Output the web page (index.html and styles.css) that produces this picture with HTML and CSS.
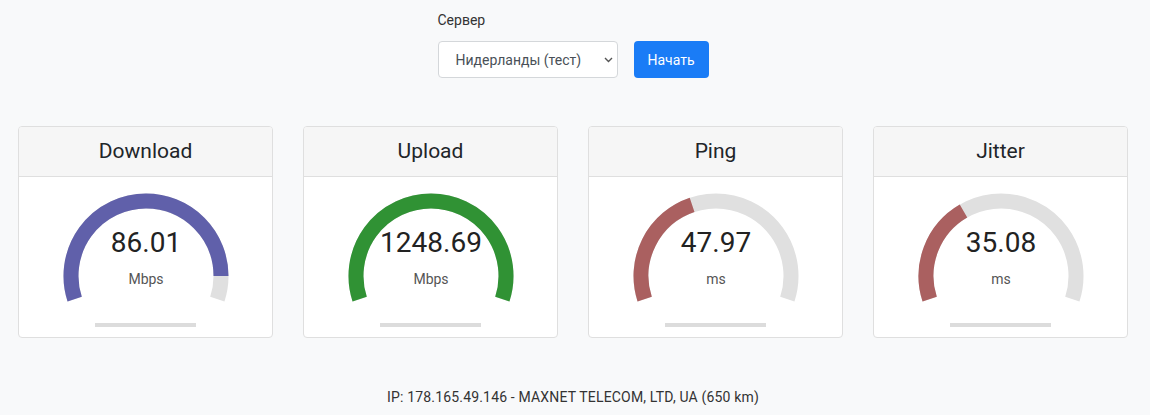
FILE: index.html
```html
<!DOCTYPE html>
<html lang="ru">
<head>
  <meta charset="UTF-8" />
  <meta name="viewport" content="width=device-width, initial-scale=1.0"/>
  <title>Speedtest</title>
  <link rel="stylesheet" href="styles.css">
</head>
<body>
  <div class="page">
    <!-- Server picker -->
    <div class="server">
      <label class="server-label" for="serverSelect">Сервер</label>
      <div class="server-row">
        <div class="select-wrap">
          <select id="serverSelect" class="server-select">
            <option>Нидерланды (тест)</option>
          </select>
          <svg class="select-arrow" width="9" height="6" viewBox="0 0 9 6"><path d="M1 1l3.5 3.5L8 1" fill="none" stroke="#555" stroke-width="1.4"/></svg>
        </div>
        <button class="start-button">Начать</button>
      </div>
    </div>

    <!-- Meters -->
    <div class="meters">
      <div class="meter-card">
        <div class="meter-head">Download</div>
        <div class="meter-body">
          <svg class="gauge" width="170" height="122" viewBox="0 0 170 122">
            <path class="arc-bg" d="M13.67 112.18 A75 75 0 1 1 156.33 112.18" />
            <path class="arc-dl" d="M13.67 112.18 A75 75 0 1 1 156.33 112.18" pathLength="100" stroke-dasharray="91.7 100" />
            <text class="gauge-value" x="85" y="65">86.01</text>
            <text class="gauge-unit" x="85" y="97">Mbps</text>
          </svg>
          <div class="progress"></div>
        </div>
      </div>

      <div class="meter-card">
        <div class="meter-head">Upload</div>
        <div class="meter-body">
          <svg class="gauge" width="170" height="122" viewBox="0 0 170 122">
            <path class="arc-bg" d="M13.67 112.18 A75 75 0 1 1 156.33 112.18" />
            <path class="arc-ul" d="M13.67 112.18 A75 75 0 1 1 156.33 112.18" pathLength="100" stroke-dasharray="100 100" />
            <text class="gauge-value" x="85" y="65">1248.69</text>
            <text class="gauge-unit" x="85" y="97">Mbps</text>
          </svg>
          <div class="progress"></div>
        </div>
      </div>

      <div class="meter-card">
        <div class="meter-head">Ping</div>
        <div class="meter-body">
          <svg class="gauge" width="170" height="122" viewBox="0 0 170 122">
            <path class="arc-bg" d="M13.67 112.18 A75 75 0 1 1 156.33 112.18" />
            <path class="arc-ping" d="M13.67 112.18 A75 75 0 1 1 156.33 112.18" pathLength="100" stroke-dasharray="41.4 100" />
            <text class="gauge-value" x="85" y="65">47.97</text>
            <text class="gauge-unit" x="85" y="97">ms</text>
          </svg>
          <div class="progress"></div>
        </div>
      </div>

      <div class="meter-card">
        <div class="meter-head">Jitter</div>
        <div class="meter-body">
          <svg class="gauge" width="170" height="122" viewBox="0 0 170 122">
            <path class="arc-bg" d="M13.67 112.18 A75 75 0 1 1 156.33 112.18" />
            <path class="arc-ping" d="M13.67 112.18 A75 75 0 1 1 156.33 112.18" pathLength="100" stroke-dasharray="36.1 100" />
            <text class="gauge-value" x="85" y="65">35.08</text>
            <text class="gauge-unit" x="85" y="97">ms</text>
          </svg>
          <div class="progress"></div>
        </div>
      </div>
    </div>

    <!-- Client info -->
    <div class="ip-info">IP: 178.165.49.146 - MAXNET TELECOM, LTD, UA (650 km)</div>
  </div>
</body>
</html>
```

FILE: styles.css
```css
/* Base reset */
* {
  box-sizing: border-box;
  margin: 0;
  padding: 0;
}

body {
  font-family: Roboto, "Noto Sans", sans-serif;
  background: #f8f9fa;
  color: #212529;
}

.page {
  padding: 10px 22px 0 18px;
}

/* Server picker */
.server {
  width: 271px;
  margin: 0 auto;
}

.server-label {
  display: block;
  font-size: 14px;
  line-height: 21px;
  color: #333;
  margin-bottom: 10px;
}

.server-row {
  display: flex;
  gap: 16px;
}

.select-wrap {
  position: relative;
  width: 180px;
}

.server-select {
  appearance: none;
  width: 180px;
  height: 37px;
  padding: 0 24px 0 17px;
  font-family: Roboto, sans-serif;
  font-size: 14px;
  color: #495057;
  background: #fff;
  border: 1px solid #d4d7da;
  border-radius: 4px;
}

.select-arrow {
  position: absolute;
  right: 5px;
  top: 16px;
  pointer-events: none;
}

.start-button {
  width: 75px;
  height: 37px;
  background-color: #1a7cf6;
  color: #fff;
  border: none;
  border-radius: 4px;
  font-family: Roboto, sans-serif;
  font-size: 14px;
  font-weight: 400;
}

/* Meter cards */
.meters {
  display: flex;
  gap: 30px;
  margin-top: 48px;
}

.meter-card {
  width: 255px;
  background: #fff;
  border: 1px solid #dfdfdf;
  border-radius: 4px;
  overflow: hidden;
}

.meter-head {
  height: 50px;
  line-height: 48px;
  text-align: center;
  font-size: 21px;
  color: #212529;
  background: #f6f6f6;
  border-bottom: 1px solid #dfdfdf;
}

.meter-body {
  display: flex;
  flex-direction: column;
  align-items: center;
  padding: 10px 0 10px;
}

.gauge {
  display: block;
}

.gauge path {
  fill: none;
  stroke-width: 15;
}

.arc-bg { stroke: #e0e0e0; }
.arc-dl { stroke: #6060aa; }
.arc-ul { stroke: #309234; }
.arc-ping { stroke: #aa6060; }

.gauge-value {
  font-family: Roboto, sans-serif;
  font-size: 28px;
  fill: #222;
  text-anchor: middle;
}

.gauge-unit {
  font-family: Roboto, sans-serif;
  font-size: 14px;
  fill: #555;
  text-anchor: middle;
}

.progress {
  width: 101px;
  height: 4px;
  margin-top: 14px;
  background: #dcdcdc;
}

/* Footer line */
.ip-info {
  margin-top: 51px;
  text-align: center;
  font-size: 14px;
  letter-spacing: 0.17px;
  color: #333;
}
```
